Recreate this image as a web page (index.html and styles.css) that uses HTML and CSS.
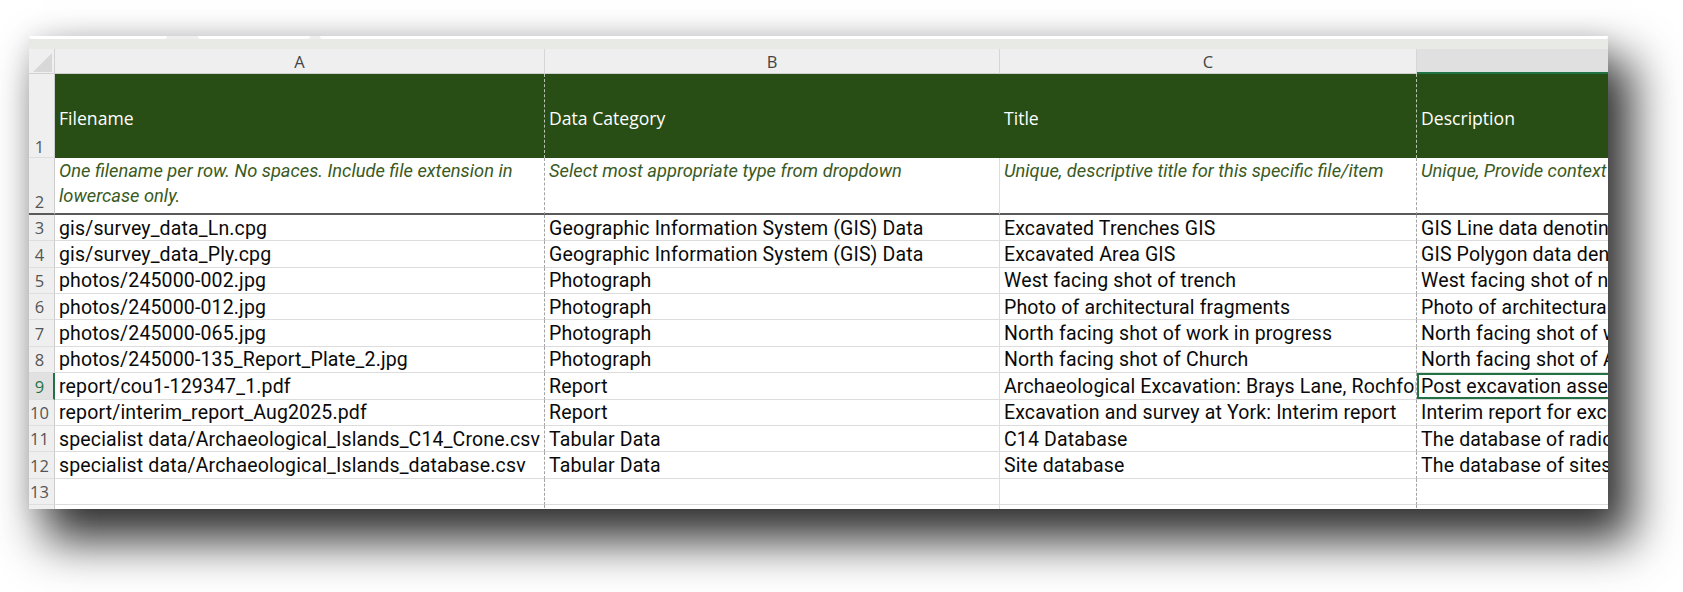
FILE: index.html
```html
<!DOCTYPE html>
<html>
<head>
<meta charset="utf-8">
<link rel="stylesheet" href="styles.css">
</head>
<body>
<div class="page">
<div class="sheet">
  <div class="strip">
    <div class="box b1"></div>
    <div class="box b2"></div>
    <div class="box b3"></div>
  </div>
  <div class="band"></div>
  <div class="grid">
    <div class="corner"></div>
    <div class="ch">A</div>
    <div class="ch">B</div>
    <div class="ch">C</div>
    <div class="ch sel">D</div>

    <div class="rh r1">1</div>
    <div class="c hd ca">Filename</div>
    <div class="c hd cb">Data Category</div>
    <div class="c hd cc">Title</div>
    <div class="c hd cd">Description</div>

    <div class="rh r2">2</div>
    <div class="c note ca">One filename per row. No spaces. Include file extension in lowercase only.</div>
    <div class="c note cb">Select most appropriate type from dropdown</div>
    <div class="c note cc">Unique, descriptive title for this specific file/item</div>
    <div class="c note cd nw">Unique, Provide context for this specific file/item</div>

    <div class="rh">3</div>
    <div class="c ca">gis/survey_data_Ln.cpg</div>
    <div class="c cb">Geographic Information System (GIS) Data</div>
    <div class="c cc">Excavated Trenches GIS</div>
    <div class="c cd">GIS Line data denoting excavated trenches</div>

    <div class="rh">4</div>
    <div class="c ca">gis/survey_data_Ply.cpg</div>
    <div class="c cb">Geographic Information System (GIS) Data</div>
    <div class="c cc">Excavated Area GIS</div>
    <div class="c cd">GIS Polygon data denoting excavated area</div>

    <div class="rh">5</div>
    <div class="c ca">photos/245000-002.jpg</div>
    <div class="c cb">Photograph</div>
    <div class="c cc">West facing shot of trench</div>
    <div class="c cd">West facing shot of north section</div>

    <div class="rh">6</div>
    <div class="c ca">photos/245000-012.jpg</div>
    <div class="c cb">Photograph</div>
    <div class="c cc">Photo of architectural fragments</div>
    <div class="c cd">Photo of architectural fragments recovered</div>

    <div class="rh">7</div>
    <div class="c ca">photos/245000-065.jpg</div>
    <div class="c cb">Photograph</div>
    <div class="c cc">North facing shot of work in progress</div>
    <div class="c cd">North facing shot of work in progress</div>

    <div class="rh">8</div>
    <div class="c ca">photos/245000-135_Report_Plate_2.jpg</div>
    <div class="c cb">Photograph</div>
    <div class="c cc">North facing shot of Church</div>
    <div class="c cd">North facing shot of All Saints Church</div>

    <div class="rh selrow">9</div>
    <div class="c ca">report/cou1-129347_1.pdf</div>
    <div class="c cb">Report</div>
    <div class="c cc">Archaeological Excavation: Brays Lane, Rochford</div>
    <div class="c cd active">Post excavation assessment report</div>

    <div class="rh">10</div>
    <div class="c ca">report/interim_report_Aug2025.pdf</div>
    <div class="c cb">Report</div>
    <div class="c cc">Excavation and survey at York: Interim report</div>
    <div class="c cd">Interim report for excavation and survey at York</div>

    <div class="rh">11</div>
    <div class="c ca">specialist data/Archaeological_Islands_C14_Crone.csv</div>
    <div class="c cb">Tabular Data</div>
    <div class="c cc">C14 Database</div>
    <div class="c cd">The database of radiocarbon dates</div>

    <div class="rh">12</div>
    <div class="c ca">specialist data/Archaeological_Islands_database.csv</div>
    <div class="c cb">Tabular Data</div>
    <div class="c cc">Site database</div>
    <div class="c cd">The database of sites</div>

    <div class="rh">13</div>
    <div class="c ca"></div>
    <div class="c cb"></div>
    <div class="c cc"></div>
    <div class="c cd"></div>

    <div class="rh">14</div>
    <div class="c ca"></div>
    <div class="c cb"></div>
    <div class="c cc"></div>
    <div class="c cd"></div>
  </div>
</div>
</div>
</body>
</html>
```
FILE: styles.css
```css
html, body {
  margin: 0;
  padding: 0;
  background: #ffffff;
}

.page {
  width: 1683px;
  height: 592px;
  padding: 36px 0 0 29px;
  box-sizing: border-box;
  overflow: hidden;
}

.sheet {
  width: 1579px;
  height: 473px;
  overflow: hidden;
  background: #ffffff;
  display: flex;
  flex-direction: column;
  box-shadow: 20px 28px 44px 4px rgba(0, 0, 0, 0.8), 0 0 24px rgba(0, 0, 0, 0.10);
}

.strip {
  height: 3px;
  flex: none;
  background: #efefef;
  display: flex;
}

.box {
  height: 3px;
  background: #ffffff;
  border-radius: 0 0 4px 4px;
}
.b1 { width: 138px; }
.b2 { width: 112px; margin-left: 31px; }
.b3 { flex: 1; margin-left: 10px; }

.band {
  height: 10px;
  flex: none;
  background: #e8eae6;
}

.grid {
  display: grid;
  grid-template-columns: 26px 490px 455px 417px 560px;
  grid-template-rows: 25px 84px 57px repeat(12, 26.36px);
  font-family: Roboto, "Liberation Sans", sans-serif;
}

.corner {
  background: #efefef;
  border-right: 1px solid #d2d2d2;
  border-bottom: 1px solid #d2d2d2;
  box-sizing: border-box;
  position: relative;
}
.corner::after {
  content: "";
  position: absolute;
  left: 4px;
  top: 4px;
  width: 19px;
  height: 19px;
  background: #d8d8d8;
  clip-path: polygon(100% 0, 100% 100%, 0 100%);
}

.ch {
  background: #efefef;
  border-right: 1px solid #d6d6d6;
  border-bottom: 1px solid #cfcfcf;
  box-sizing: border-box;
  display: flex;
  align-items: center;
  justify-content: center;
  padding-top: 1px;
  font-family: "Open Sans", "Noto Sans", sans-serif;
  font-size: 16.5px;
  color: #444444;
}
.ch.sel {
  background: #e0e0e0;
  border-bottom: 2px solid #217346;
}

.rh {
  background: #efefef;
  border-right: 1px solid #cccccc;
  border-bottom: 1px solid #dedede;
  box-sizing: border-box;
  display: flex;
  align-items: flex-end;
  justify-content: center;
  padding-right: 4px;
  padding-bottom: 1px;
  font-family: "Open Sans", "Noto Sans", sans-serif;
  font-size: 16.5px;
  line-height: 23px;
  color: #555555;
}
.rh.r1 {
  padding-bottom: 0;
  line-height: 21px;
}
.rh.r2 {
  border-bottom: 2px solid #5a5a5a;
  padding-bottom: 0;
}
.rh.selrow {
  background: #e1e1e1;
  color: #217346;
  border-right: 2px solid #217346;
  padding-right: 3px;
}

.c {
  box-sizing: border-box;
  overflow: hidden;
  white-space: nowrap;
  border-bottom: 1px solid #dcdcdc;
  border-right: 1px solid #dcdcdc;
  padding: 1px 3px 0 4px;
  display: flex;
  align-items: center;
  font-size: 19.5px;
  letter-spacing: 0.15px;
  color: #0a0a0a;
}
.ca, .cc {
  border-right: 1px dashed #a3a3a3;
}

.hd {
  background: #284e15;
  color: #ffffff;
  font-family: "Open Sans", "Noto Sans", sans-serif;
  font-size: 17.6px;
  letter-spacing: 0;
  border-bottom: none;
  padding-top: 4px;
}
.hd.cb {
  border-right-color: #284e15;
}
.hd.ca, .hd.cc {
  border-right: 1px dashed #b8c2b0;
}

.note {
  align-items: flex-start;
  white-space: normal;
  font-style: italic;
  font-size: 18.3px;
  letter-spacing: 0;
  line-height: 25px;
  color: #3a5a22;
  border-bottom: 2px solid #5a5a5a;
  padding-top: 0;
}
.note.nw {
  white-space: nowrap;
}

.active {
  box-shadow: inset 0 0 0 2px #217346;
  border-right: none;
}
```
